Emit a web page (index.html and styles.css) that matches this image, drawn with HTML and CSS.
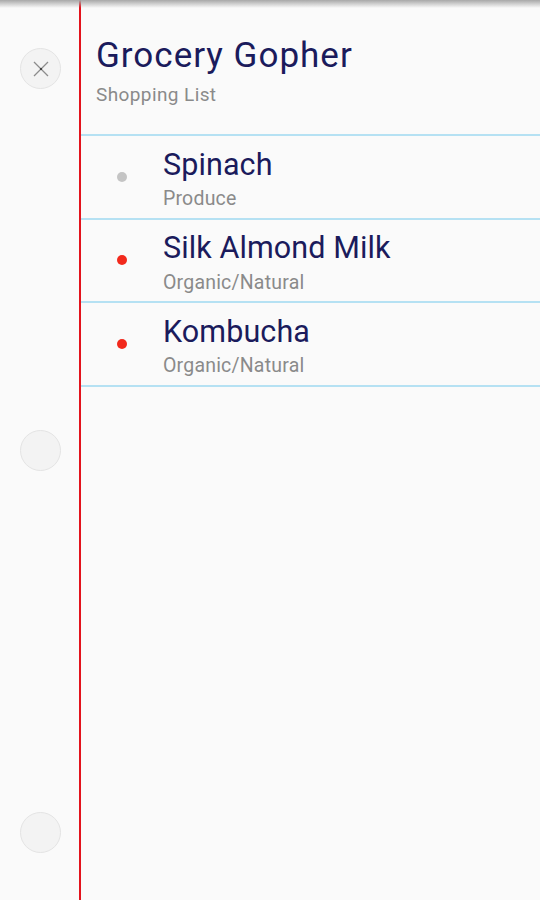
FILE: index.html
```html
<!DOCTYPE html>
<html lang="en">
  <head>
    <meta charset="UTF-8" />
    <meta name="viewport" content="width=device-width, initial-scale=1.0" />
    <title>Grocery Gopher</title>
    <link rel="stylesheet" href="styles.css">
  </head>

  <body>
    <div class="page">
      <div class="topShade"></div>

      <!-- left margin with the three round buttons -->
      <aside class="margin">
        <button class="roundButton" aria-label="Close">
          <svg width="20" height="20" viewBox="0 0 20 20">
            <path d="M3 3 L17 17 M17 3 L3 17" stroke="#8c8c8c" stroke-width="1.3" fill="none" />
            <rect x="9" y="9" width="2" height="2" fill="#444" />
          </svg>
        </button>
        <button class="roundButton" aria-label="Empty"></button>
        <button class="roundButton" aria-label="Empty"></button>
      </aside>

      <main class="sheet">
        <header class="listHeader">
          <h1 class="listTitle">Grocery Gopher</h1>
          <p class="listSubtitle">Shopping List</p>
        </header>

        <ul class="items">
          <li class="item">
            <span class="dot dot-done"></span>
            <div class="itemText">
              <div class="itemName">Spinach</div>
              <div class="itemAisle">Produce</div>
            </div>
          </li>
          <li class="item">
            <span class="dot dot-todo"></span>
            <div class="itemText">
              <div class="itemName">Silk Almond Milk</div>
              <div class="itemAisle">Organic/Natural</div>
            </div>
          </li>
          <li class="item">
            <span class="dot dot-todo"></span>
            <div class="itemText">
              <div class="itemName">Kombucha</div>
              <div class="itemAisle">Organic/Natural</div>
            </div>
          </li>
        </ul>
      </main>
    </div>
  </body>
</html>
```

FILE: styles.css
```css
/* Whole page */
body {
  margin: 0;
  background-color: #fafafa;
  font-family: Roboto, "Noto Sans", sans-serif;
}

.page {
  position: relative;
  display: flex;
  height: 900px;
  overflow: hidden;
}

/* Shadow under the status bar */
.topShade {
  position: absolute;
  top: 0;
  left: 0;
  right: 0;
  height: 8px;
  background: linear-gradient(#a8a8a8, rgba(250, 250, 250, 0));
}

/* Left margin of the notepad */
.margin {
  width: 81px;
  flex-shrink: 0;
  border-right: 2px solid #e3121c;
  display: flex;
  flex-direction: column;
  justify-content: space-between;
  align-items: center;
  padding: 48px 0 47px 2px;
  box-sizing: border-box;
}

.roundButton {
  width: 41px;
  height: 41px;
  border-radius: 50%;
  border: 1px solid #e4e4e4;
  background-color: #f3f3f3;
  padding: 0;
  display: flex;
  justify-content: center;
  align-items: center;
}

/* Lined sheet */
.sheet {
  flex: 1;
}

.listHeader {
  height: 136px;
  box-sizing: border-box;
  padding: 35.5px 0 0 15px;
  border-bottom: 2px solid #b5e1f3;
}

.listTitle {
  margin: 0;
  font-size: 35px;
  line-height: 40px;
  font-weight: 400;
  letter-spacing: 1px;
  color: #1b1b5c;
}

.listSubtitle {
  margin: 8.5px 0 0;
  font-size: 19px;
  line-height: 22px;
  letter-spacing: 0.4px;
  color: #8a8a8a;
}

.items {
  list-style: none;
  margin: 0;
  padding: 0;
}

.item {
  display: grid;
  grid-template-columns: 82px 1fr;
  align-items: center;
  height: 81.5px;
  border-bottom: 2px solid #b5e1f3;
}

.dot {
  justify-self: center;
  width: 10px;
  height: 10px;
  border-radius: 50%;
}

.dot-done {
  background-color: #c4c4c4;
}

.dot-todo {
  background-color: #f2291c;
}

.itemText {
  align-self: start;
  padding-top: 11.5px;
}

.itemName {
  font-size: 30.5px;
  line-height: 34px;
  letter-spacing: 0.1px;
  color: #1b1b5c;
}

.itemAisle {
  margin-top: 6.5px;
  font-size: 19.5px;
  line-height: 22px;
  letter-spacing: 0.2px;
  color: #8a8a8a;
}
```
